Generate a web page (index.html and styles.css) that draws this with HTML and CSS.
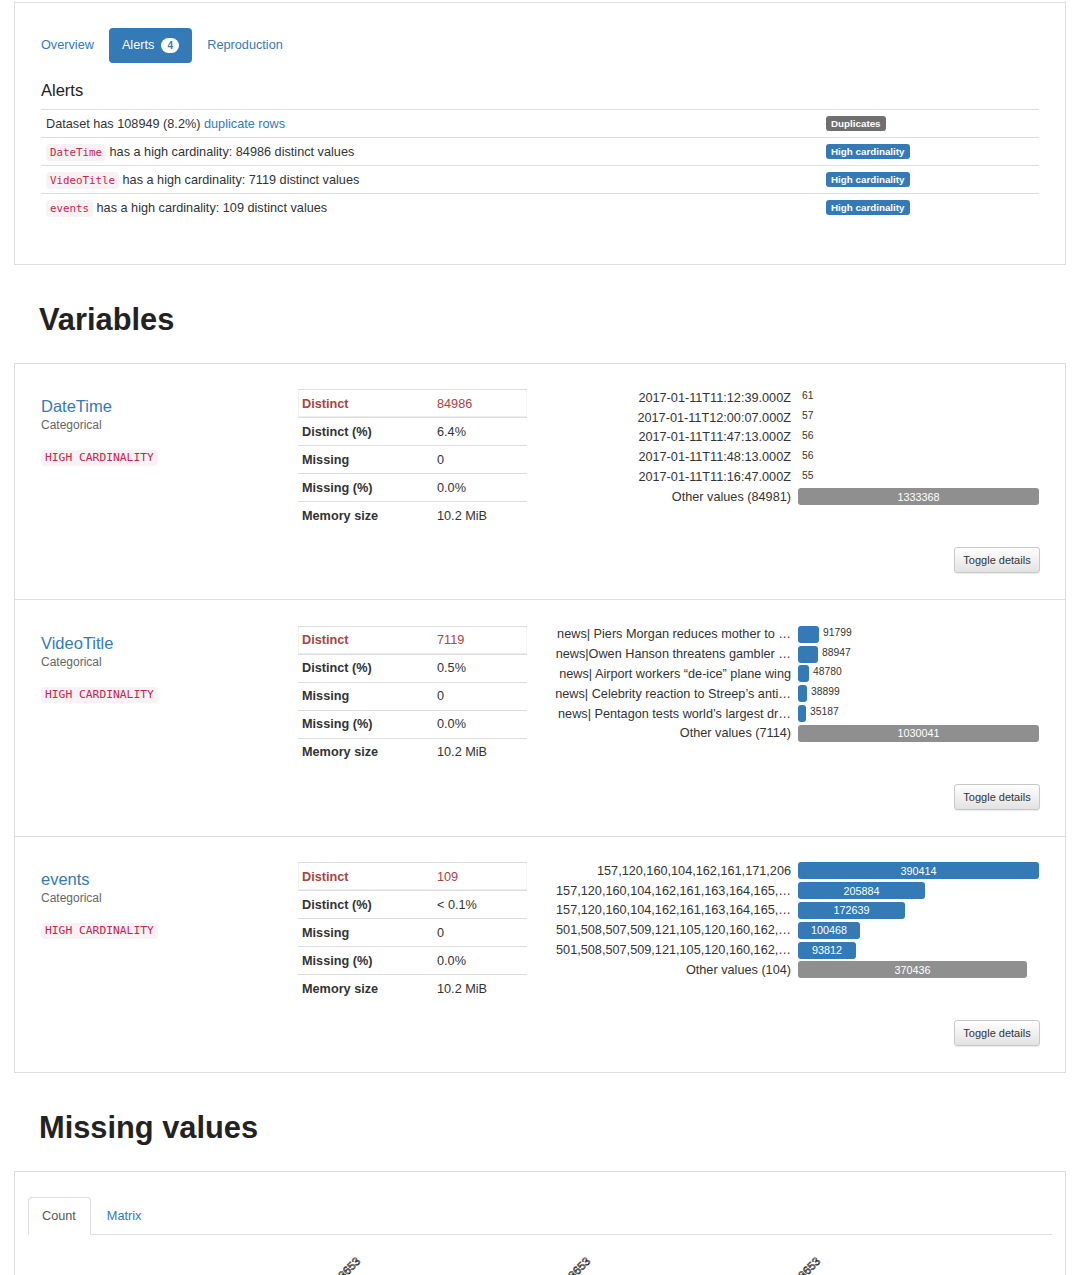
FILE: index.html
```html
<!DOCTYPE html>
<html lang="en">
<head>
<meta charset="utf-8">
<title>Profiling Report</title>
<link rel="stylesheet" href="styles.css">
</head>
<body>
<div class="page">

  <section class="panel overview">
    <ul class="pills">
      <li><a>Overview</a></li>
      <li class="active"><a>Alerts <span class="count">4</span></a></li>
      <li><a>Reproduction</a></li>
    </ul>
    <div class="pane">
      <h4 class="alerts-title">Alerts</h4>
      <div class="alerts">
        <div class="arow"><div class="amsg">Dataset has 108949 (8.2%) <a class="link">duplicate rows</a></div><div class="atag"><span class="label grey">Duplicates</span></div></div>
        <div class="arow"><div class="amsg"><code class="code">DateTime</code> has a high cardinality: 84986 distinct values</div><div class="atag"><span class="label blue">High cardinality</span></div></div>
        <div class="arow"><div class="amsg"><code class="code">VideoTitle</code> has a high cardinality: 7119 distinct values</div><div class="atag"><span class="label blue">High cardinality</span></div></div>
        <div class="arow"><div class="amsg"><code class="code">events</code> has a high cardinality: 109 distinct values</div><div class="atag"><span class="label blue">High cardinality</span></div></div>
      </div>
    </div>
  </section>

  <h1 class="section-title">Variables</h1>

  <section class="varlist">
    <div class="var">
      <div class="var-grid">
        <div class="var-info">
          <div class="var-name">DateTime</div>
          <div class="var-type">Categorical</div>
          <code class="code warn">HIGH CARDINALITY</code>
        </div>
        <div class="stats">
          <div class="srow alert"><span class="sk">Distinct</span><span class="sv">84986</span></div>
          <div class="srow"><span class="sk">Distinct (%)</span><span class="sv">6.4%</span></div>
          <div class="srow"><span class="sk">Missing</span><span class="sv">0</span></div>
          <div class="srow"><span class="sk">Missing (%)</span><span class="sv">0.0%</span></div>
          <div class="srow"><span class="sk">Memory size</span><span class="sv">10.2 MiB</span></div>
        </div>
        <div class="freq">
          <div class="frow"><span class="flabel">2017-01-11T11:12:39.000Z</span><span class="fcell"><span class="fbar" style="width:0px"></span><span class="fout">61</span></span></div>
          <div class="frow"><span class="flabel">2017-01-11T12:00:07.000Z</span><span class="fcell"><span class="fbar" style="width:0px"></span><span class="fout">57</span></span></div>
          <div class="frow"><span class="flabel">2017-01-11T11:47:13.000Z</span><span class="fcell"><span class="fbar" style="width:0px"></span><span class="fout">56</span></span></div>
          <div class="frow"><span class="flabel">2017-01-11T11:48:13.000Z</span><span class="fcell"><span class="fbar" style="width:0px"></span><span class="fout">56</span></span></div>
          <div class="frow"><span class="flabel">2017-01-11T11:16:47.000Z</span><span class="fcell"><span class="fbar" style="width:0px"></span><span class="fout">55</span></span></div>
          <div class="frow"><span class="flabel">Other values (84981)</span><span class="fcell"><span class="fbar other" style="width:241px">1333368</span></span></div>
        </div>
      </div>
      <div class="var-foot"><button class="toggle">Toggle details</button></div>
    </div>

    <div class="var">
      <div class="var-grid">
        <div class="var-info">
          <div class="var-name">VideoTitle</div>
          <div class="var-type">Categorical</div>
          <code class="code warn">HIGH CARDINALITY</code>
        </div>
        <div class="stats">
          <div class="srow alert"><span class="sk">Distinct</span><span class="sv">7119</span></div>
          <div class="srow"><span class="sk">Distinct (%)</span><span class="sv">0.5%</span></div>
          <div class="srow"><span class="sk">Missing</span><span class="sv">0</span></div>
          <div class="srow"><span class="sk">Missing (%)</span><span class="sv">0.0%</span></div>
          <div class="srow"><span class="sk">Memory size</span><span class="sv">10.2 MiB</span></div>
        </div>
        <div class="freq">
          <div class="frow"><span class="flabel">news| Piers Morgan reduces mother to …</span><span class="fcell"><span class="fbar" style="width:21px"></span><span class="fout">91799</span></span></div>
          <div class="frow"><span class="flabel">news|Owen Hanson threatens gambler …</span><span class="fcell"><span class="fbar" style="width:20px"></span><span class="fout">88947</span></span></div>
          <div class="frow"><span class="flabel">news| Airport workers “de-ice” plane wing</span><span class="fcell"><span class="fbar" style="width:11px"></span><span class="fout">48780</span></span></div>
          <div class="frow"><span class="flabel">news| Celebrity reaction to Streep’s anti…</span><span class="fcell"><span class="fbar" style="width:9px"></span><span class="fout">38899</span></span></div>
          <div class="frow"><span class="flabel">news| Pentagon tests world’s largest dr…</span><span class="fcell"><span class="fbar" style="width:8px"></span><span class="fout">35187</span></span></div>
          <div class="frow"><span class="flabel">Other values (7114)</span><span class="fcell"><span class="fbar other" style="width:241px">1030041</span></span></div>
        </div>
      </div>
      <div class="var-foot"><button class="toggle">Toggle details</button></div>
    </div>

    <div class="var">
      <div class="var-grid">
        <div class="var-info">
          <div class="var-name">events</div>
          <div class="var-type">Categorical</div>
          <code class="code warn">HIGH CARDINALITY</code>
        </div>
        <div class="stats">
          <div class="srow alert"><span class="sk">Distinct</span><span class="sv">109</span></div>
          <div class="srow"><span class="sk">Distinct (%)</span><span class="sv">&lt; 0.1%</span></div>
          <div class="srow"><span class="sk">Missing</span><span class="sv">0</span></div>
          <div class="srow"><span class="sk">Missing (%)</span><span class="sv">0.0%</span></div>
          <div class="srow"><span class="sk">Memory size</span><span class="sv">10.2 MiB</span></div>
        </div>
        <div class="freq">
          <div class="frow"><span class="flabel">157,120,160,104,162,161,171,206</span><span class="fcell"><span class="fbar" style="width:241px">390414</span></span></div>
          <div class="frow"><span class="flabel">157,120,160,104,162,161,163,164,165,…</span><span class="fcell"><span class="fbar" style="width:127px">205884</span></span></div>
          <div class="frow"><span class="flabel">157,120,160,104,162,161,163,164,165,…</span><span class="fcell"><span class="fbar" style="width:107px">172639</span></span></div>
          <div class="frow"><span class="flabel">501,508,507,509,121,105,120,160,162,…</span><span class="fcell"><span class="fbar" style="width:62px">100468</span></span></div>
          <div class="frow"><span class="flabel">501,508,507,509,121,105,120,160,162,…</span><span class="fcell"><span class="fbar" style="width:58px">93812</span></span></div>
          <div class="frow"><span class="flabel">Other values (104)</span><span class="fcell"><span class="fbar other" style="width:229px">370436</span></span></div>
        </div>
      </div>
      <div class="var-foot"><button class="toggle">Toggle details</button></div>
    </div>
  </section>

  <h1 class="section-title">Missing values</h1>

  <section class="panel missing">
    <ul class="tabs">
      <li class="active"><a>Count</a></li>
      <li><a>Matrix</a></li>
    </ul>
    <div class="chart">
      <svg class="chart-svg" width="1025" height="80" viewBox="0 0 1025 80">
        <text class="bar-count" x="333" y="27" text-anchor="end" transform="rotate(-45 333 27)">1333653</text>
        <text class="bar-count" x="563" y="27" text-anchor="end" transform="rotate(-45 563 27)">1333653</text>
        <text class="bar-count" x="793" y="27" text-anchor="end" transform="rotate(-45 793 27)">1333653</text>
      </svg>
    </div>
  </section>

</div>
</body>
</html>
```

FILE: styles.css
```css
* { box-sizing: border-box; }

body {
  margin: 0;
  font-family: "Liberation Sans", Arial, Helvetica, sans-serif;
  font-size: 12.7px;
  color: #333;
  background: #fff;
}

.page {
  padding: 2px 14px 0 14px;
}

.panel {
  border: 1px solid #ddd;
  padding: 25px 13px;
}

/* pills */
.pills {
  display: flex;
  list-style: none;
  margin: 0;
  padding: 0;
  gap: 2px;
}
.pills a {
  display: flex;
  align-items: center;
  gap: 7px;
  padding: 10px 13px;
  line-height: 15px;
  color: #337ab7;
  border-radius: 4px;
}
.pills .active a {
  background: #337ab7;
  color: #fff;
}
.count {
  display: inline-flex;
  align-items: center;
  justify-content: center;
  min-width: 18px;
  height: 15px;
  padding: 0 5px;
  border-radius: 8px;
  background: #fff;
  color: #337ab7;
  font-size: 10px;
  font-weight: bold;
}

.pane {
  padding: 0 13px;
}

.alerts-title {
  font-size: 16.5px;
  font-weight: normal;
  line-height: 20px;
  margin: 17px 0 9px;
  color: #222;
}

.alerts {
  margin-bottom: 18px;
}
.arow {
  display: grid;
  grid-template-columns: 1fr 218px;
  height: 28px;
  border-top: 1px solid #ddd;
  align-items: center;
}
.amsg {
  padding: 0 5px;
  white-space: nowrap;
}
.atag {
  padding: 0 5px;
}
.link { color: #337ab7; }

.label {
  display: inline-block;
  font-size: 9.8px;
  font-weight: bold;
  line-height: 11px;
  padding: 2px 5px 2px;
  color: #fff;
  border-radius: 3px;
}
.label.grey { background: #6f6f6f; }
.label.blue { background: #337ab7; }

.code {
  font-family: "DejaVu Sans Mono", "Liberation Mono", monospace;
  font-size: 10.8px;
  color: #c7254e;
  background: #f9f2f4;
  border-radius: 4px;
  padding: 2px 4px;
}

/* section titles */
.section-title {
  font-size: 30.8px;
  font-weight: bold;
  line-height: 36px;
  margin: 37px 0 25px;
  padding-left: 25px;
  color: #222;
}

/* variables */
.varlist {
  border: 1px solid #ddd;
}
.var {
  padding: 25px 25px 26px 26px;
}
.var + .var {
  border-top: 1px solid #ddd;
  padding-top: 25.5px;
}
.var-grid {
  display: grid;
  grid-template-columns: 257px 229px 1fr;
  align-items: start;
}
.var-name {
  font-size: 16.5px;
  line-height: 20px;
  margin-top: 7px;
  color: #337ab7;
}
.var-type {
  font-size: 12px;
  line-height: 18px;
  color: #666;
}
.var-info .warn {
  display: inline-block;
  margin-top: 16px;
  line-height: 12px;
  font-size: 11.3px;
}

.stats {
  width: 229px;
}
.srow {
  display: grid;
  grid-template-columns: 135px 1fr;
  height: 28px;
  align-items: center;
  border-top: 1px solid #ddd;
  padding-left: 4px;
}
.srow.alert {
  color: #a94442;
  box-shadow: inset 1px 0 0 #f1f1f1, inset -1px 0 0 #f1f1f1, inset 0 -1px 0 #eee;
}
.sk { font-weight: bold; }

.freq {
  margin-left: 27px;
  margin-top: -1px;
}
.frow {
  display: grid;
  grid-template-columns: 237px 1fr;
  column-gap: 7px;
  height: 19.8px;
  align-items: center;
}
.flabel {
  text-align: right;
  white-space: nowrap;
  overflow: hidden;
  text-overflow: ellipsis;
}
.fcell {
  display: flex;
  align-items: center;
}
.fbar {
  display: flex;
  align-items: center;
  justify-content: center;
  height: 17px;
  border-radius: 3px;
  background: #337ab7;
  color: #fff;
  font-size: 10.8px;
  overflow: hidden;
}
.fbar.other {
  background: #8f8f8f;
}
.fout {
  font-size: 10.3px;
  margin-left: 4px;
  margin-top: -4px;
}

.var-foot {
  display: flex;
  justify-content: flex-end;
  margin-top: 18px;
}
.toggle {
  height: 26px;
  width: 86px;
  padding: 0;
  font-family: "Liberation Sans", Arial, sans-serif;
  font-size: 11px;
  color: #333;
  background: linear-gradient(#ffffff, #e2e2e2);
  border: 1px solid #c8c8c8;
  border-radius: 3px;
  box-shadow: 0 1px 1px rgba(0,0,0,0.08);
}

/* missing values */
.missing {
  padding-bottom: 60px;
}
.tabs {
  display: flex;
  list-style: none;
  margin: 0;
  padding: 0;
  border-bottom: 1px solid #ddd;
}
.tabs li {
  margin-bottom: -1px;
  margin-right: 2px;
}
.tabs a {
  display: block;
  padding: 11px 14px 10px 13px;
  line-height: 15px;
  border: 1px solid transparent;
  border-radius: 4px 4px 0 0;
  color: #337ab7;
}
.tabs .active a {
  color: #555;
  background: #fff;
  border-color: #ddd #ddd transparent;
}
.chart-svg {
  display: block;
}
.bar-count {
  font-family: "Liberation Sans", Arial, sans-serif;
  font-size: 11.5px;
  fill: #fff;
  stroke: #222;
  stroke-width: 0.6;
}
```
